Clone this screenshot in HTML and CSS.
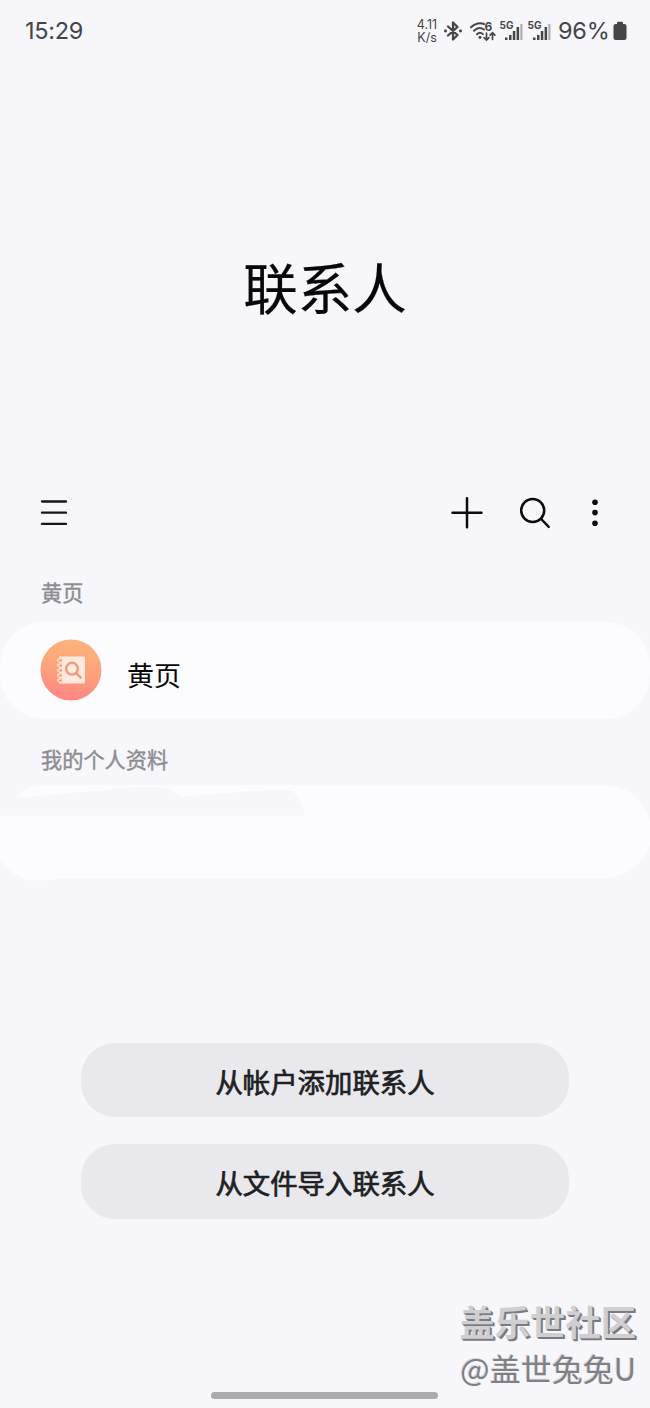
FILE: index.html
```html
<!DOCTYPE html>
<html lang="zh-CN">
<head>
<meta charset="utf-8">
<title>联系人</title>
<link rel="stylesheet" href="styles.css">
</head>
<body>
<div class="screen">
  <header class="status">
    <span class="clock">15:29</span>
    <div class="status-icons">
      <span class="speed"><span>4.11</span><span>K/s</span></span>
      <svg class="bluetooth" width="20" height="24" viewBox="0 0 20 24" fill="none" stroke="#454548" stroke-width="2.3" stroke-linejoin="round" stroke-linecap="round"><path d="M5 7.5 14.5 16 10 20.5V3.5L14.5 8 5 16.5"/><path d="M2.4 12h.2M17.4 12h.2" stroke-width="2.8"/></svg>
      <svg class="wifi" width="28" height="24" viewBox="0 0 28 24" fill="none" stroke="#454548" stroke-width="2" stroke-linecap="round"><path d="M2 8.3C6 4.2 11.5 3.5 15 5M5 11.8c3-3 7-3.2 10-1.3M8 15.2c1.5-1.5 4-1.7 5.8-.2"/><circle cx="11" cy="18.3" r="1.5" fill="#454548" stroke="none"/><path d="M17.5 14v7m-2.4-2.3 2.4 2.4 2.4-2.4M23.5 20.5V14m-2.4 2.200 2.400-2.400 2.400 2.400" stroke-width="1.7"/><text class="wifi-gen" x="15.500" y="12">6</text></svg>
      <svg class="signal" width="25" height="24" viewBox="0 0 25 24"><text class="net" x="0.500" y="10">5G</text><path fill="#454548" d="M6 18.500h2.500V21H6zM10 16h2.500v5H10zM13.800 12h2.500v9h-2.500zM17.600 8h2.500v13h-2.500z"/><path fill="#aaaaad" d="M21.400 5h2v16h-2z"/></svg>
      <svg class="signal" width="25" height="24" viewBox="0 0 25 24"><text class="net" x="0.500" y="10">5G</text><path fill="#454548" d="M6 18.500h2.500V21H6zM10 16h2.500v5H10zM13.800 12h2.500v9h-2.500zM17.600 8h2.500v13h-2.500z"/><path fill="#aaaaad" d="M21.400 5h2v16h-2z"/></svg>
      <span class="percent">96%</span>
      <svg class="battery" width="14" height="20" viewBox="0 0 14 20"><path fill="#454548" d="M4 1.800Q4 .8 5 .8h4q1 0 1 1V3h1.500q2 0 2 2v12q0 2-2 2h-9q-2 0-2-2V5q0-2 2-2H4z"/></svg>
    </div>
  </header>

  <h1 class="title">联系人</h1>

  <nav class="toolbar">
    <svg class="menu" width="28" height="28" viewBox="0 0 28 28" stroke="#161618" stroke-width="2.3" stroke-linecap="round"><path d="M2 2.500h24M2 13.700h24M2 24.900h24"/></svg>
    <svg class="add" width="32" height="32" viewBox="0 0 32 32" stroke="#0c0c0e" stroke-width="2.5" stroke-linecap="round"><path d="M1.500 15.700h29M16 1.200v29"/></svg>
    <svg class="search" width="32" height="32" viewBox="0 0 32 32" fill="none" stroke="#0c0c0e" stroke-width="2.5" stroke-linecap="round"><circle cx="13.700" cy="13.500" r="11.500"/><path d="m22.200 22 7.500 7.800"/></svg>
    <svg class="more" width="8" height="30" viewBox="0 0 8 30" fill="#0c0c0e"><circle cx="4" cy="4.200" r="2.800"/><circle cx="4" cy="14.600" r="2.800"/><circle cx="4" cy="25.300" r="2.800"/></svg>
  </nav>

  <main>
    <h2 class="label">黄页</h2>
    <section class="card">
      <svg class="avatar" width="62" height="62" viewBox="0 0 62 62">
        <defs><linearGradient id="peach" x1=".55" y1="0" x2=".4" y2="1"><stop offset="0" stop-color="#fdb47b"/><stop offset=".5" stop-color="#fda27c"/><stop offset="1" stop-color="#fc8585"/></linearGradient></defs>
        <circle cx="31" cy="31" r="30.500" fill="url(#peach)"/>
        <path fill="#fde9de" d="M19 17.500h25q1 0 1 1v25q0 1-1 1H19z"/>
        <g fill="#fda27c"><circle cx="20.500" cy="21" r="1.900"/><circle cx="20.500" cy="26" r="1.900"/><circle cx="20.500" cy="31" r="1.900"/><circle cx="20.500" cy="36" r="1.900"/><circle cx="20.500" cy="41" r="1.900"/></g>
        <g fill="none" stroke="#fde9de" stroke-width="1.200" stroke-linecap="round"><path d="M21.500 20h-3q-2 1.200 0 2.400m3 2.600h-3q-2 1.200 0 2.400m3 2.600h-3q-2 1.200 0 2.400m3 2.600h-3q-2 1.200 0 2.400m3 2.600h-3q-2 1.200 0 2.400"/></g>
        <g fill="none" stroke="#f09a7c" stroke-width="2.400" stroke-linecap="round"><circle cx="32" cy="29.700" r="5.900"/><path d="m36.700 34.600 4 4"/></g>
      </svg>
      <span class="card-text">黄页</span>
    </section>
    <h2 class="label label-profile">我的个人资料</h2>
    <svg class="profile" width="650" height="98" viewBox="0 0 650 98">
      <path fill="#fcfcff" d="M38 0H607Q640 4 650 35V61Q640 88 607 93.500H60Q46 96 32 95.500C14 93 8 82 0 75V30.500H305Q300 7 287 5H265L180 12Q170 3 158 2L140 2 15 13Q24 3 38 0Z"/>
    </svg>
    <div class="actions">
      <button class="action">从帐户添加联系人</button>
      <button class="action">从文件导入联系人</button>
    </div>
  </main>

  <div class="watermark">
    <div class="community">盖乐世社区</div>
    <div class="author">@盖世兔兔U</div>
  </div>
  <div class="home-bar"></div>
</div>
</body>
</html>
```
FILE: styles.css
```css
* { box-sizing: border-box; }
body { margin: 0; background: #f6f6fb; }
.screen {
  position: relative;
  width: 650px;
  height: 1408px;
  overflow: hidden;
  background: #f6f6fb;
  font-family: "Noto Sans CJK SC", sans-serif;
  color: #080809;
}
svg { display: block; flex: none; }

.status {
  display: flex;
  align-items: center;
  justify-content: space-between;
  height: 61px;
  padding: 0 23px 0 25px;
  color: #454548;
}
.clock { font: 23.5px/30px Inter, sans-serif; letter-spacing: -0.3px; }
.status-icons { display: flex; align-items: center; }
.speed {
  display: flex;
  flex-direction: column;
  align-items: center;
  width: 24px;
  font: 12.5px/13px Inter, sans-serif;
}
.bluetooth { margin-left: 4px; }
.wifi { margin-left: 6px; }
.signal { margin-left: 2px; }
.signal + .signal { margin-left: 3px; }
.net { font: 700 10px Inter, sans-serif; fill: #454548; }
.wifi-gen { font: 700 12px Inter, sans-serif; fill: #454548; stroke: none; }
.percent { width: 52px; margin-left: 6px; font: 23.5px/30px Inter, sans-serif; letter-spacing: -0.2px; }
.battery { margin-left: 3px; }

.title {
  margin: 185px 0 0;
  height: 80px;
  font-size: 54.5px;
  font-weight: 400;
  line-height: 80px;
  text-align: center;
  -webkit-text-stroke: 0.2px #080809;
}

.toolbar {
  display: flex;
  align-items: center;
  height: 66px;
  margin-top: 154px;
  padding: 0 51px 0 40px;
}
.add { margin-left: auto; }
.search { margin-left: 36px; }
.more { margin-left: 40px; }

.label {
  margin: 31px 0 0 41px;
  height: 30px;
  font-size: 21.2px;
  font-weight: 400;
  line-height: 30px;
  color: #8d8d92;
  -webkit-text-stroke: 0.4px #8d8d92;
}
.card {
  display: flex;
  align-items: center;
  height: 97px;
  margin-top: 15px;
  padding-left: 40px;
  border-radius: 44px;
  background: #fcfcff;
}
.avatar { margin-bottom: 1px; }
.card-text { margin: 9px 0 0 25px; font-size: 27px; line-height: 40px; }
.label-profile { margin-top: 25px; }
.profile { margin-top: 11px; }

.actions {
  display: flex;
  flex-direction: column;
  gap: 27px;
  padding: 159.5px 81px 0;
}
.action {
  height: 74.5px;
  padding: 2px 0 0;
  border: 0;
  border-radius: 34px;
  background: #e9e9ed;
  color: #202022;
  font: 27.4px/40px "Noto Sans CJK SC", sans-serif;
  -webkit-text-stroke: 0.7px #202022;
}

.watermark {
  position: absolute;
  right: 14px;
  top: 1298px;
  color: #cfcfd1;
  text-align: right;
}
.community { font-size: 35.3px; font-weight: 700; line-height: 46px; text-shadow: 1px 1px 0 #7b7b7f, 2px 2px 0 #7b7b7f; }
.author { font-size: 31px; line-height: 48px; color: #808084; text-shadow: -1px -1px 0 #d6d6d9; }
.home-bar {
  position: absolute;
  left: 211px;
  top: 1392px;
  width: 227px;
  height: 7px;
  border-radius: 4px;
  background: #aaaaad;
}
```
